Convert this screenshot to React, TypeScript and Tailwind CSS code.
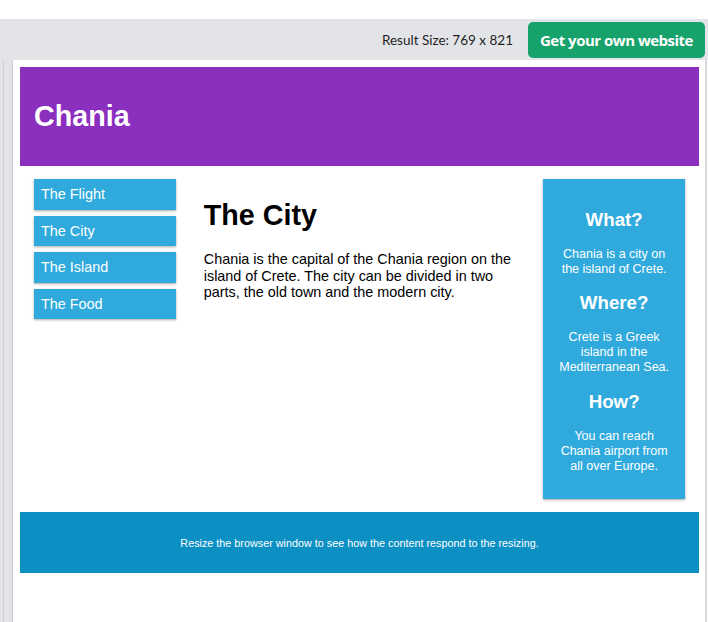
import React from "react";

const menuItems = ["The Flight", "The City", "The Island", "The Food"];

const facts = [
  { title: "What?", text: "Chania is a city on the island of Crete." },
  { title: "Where?", text: "Crete is a Greek island in the Mediterranean Sea." },
  { title: "How?", text: "You can reach Chania airport from all over Europe." },
];

const cardShadow =
  "shadow-[0_1px_3px_rgba(0,0,0,0.12),0_1px_2px_rgba(0,0,0,0.24)]";

const ResultBar: React.FC = () => (
  <div className="flex h-[41px] items-start justify-end bg-[#e3e4e8] pr-[3px] pt-[3px]">
    <span className="mr-[15px] mt-[10px] font-['Lato',sans-serif] text-[13.5px] leading-[16px] text-[#1f1f1f]">
      Result Size: 769 x 821
    </span>
    <a className="flex h-[36px] w-[177px] items-center justify-center rounded-[5px] bg-[#17a26b] font-['Open_Sans',sans-serif] text-[15px] font-bold tracking-[-0.5px] text-white">
      Get your own website
    </a>
  </div>
);

const App: React.FC = () => {
  return (
    <div className="flex h-[622px] w-[708px] flex-col overflow-hidden bg-white font-['Liberation_Sans',Arial,sans-serif]">
      <div className="h-[19px] bg-white" />
      <ResultBar />

      <div className="flex flex-1">
        {/* left gutter of the editor */}
        <div className="flex w-[13px] bg-[#e3e4e8]">
          <div className="w-[3px]" />
          <div className="w-px bg-[#cfcfd3]" />
          <div className="w-[8px]" />
          <div className="w-px bg-[#cacacd]" />
        </div>

        {/* result frame */}
        <div className="flex-1 pl-[7px] pr-[6px] pt-[7px] text-black">
          <header className="flex h-[99px] items-center bg-[#8b2fbf] px-[14px]">
            <h1 className="text-[28.7px] font-bold leading-[33px] text-white">Chania</h1>
          </header>

          <div className="grid grid-cols-4">
            <nav className="px-[14px] pb-[13px] pt-[13px]">
              <ul>
                {menuItems.map((item) => (
                  <li
                    key={item}
                    className={`mb-[6px] bg-[#30aadd] px-[7px] py-[7px] text-[14.4px] leading-[16.6px] text-white ${cardShadow}`}
                  >
                    {item}
                  </li>
                ))}
              </ul>
            </nav>

            <main className="col-span-2 px-[14px] pb-[13px] pt-[13px]">
              <h1 className="mb-[19px] mt-[20px] text-[28.7px] font-bold leading-[33px]">The City</h1>
              <p className="text-[14.4px] leading-[16.5px]">
                Chania is the capital of the Chania region on the island of Crete. The city can be
                divided in two parts, the old town and the modern city.
              </p>
            </main>

            <div className="px-[14px] pb-[13px] pt-[13px]">
              <aside
                className={`bg-[#30aadd] px-[13px] pb-[13px] pt-[14.5px] text-center text-[12.5px] leading-[15px] text-white ${cardShadow}`}
              >
                {facts.map((f) => (
                  <div key={f.title}>
                    <h2 className="my-[15.5px] text-[18.7px] font-bold leading-[22.4px]">{f.title}</h2>
                    <p className="my-[12.5px]">{f.text}</p>
                  </div>
                ))}
              </aside>
            </div>
          </div>

          <footer className="flex h-[61px] items-center justify-center bg-[#0c8fc3] text-[10.8px] leading-[12px] text-white">
            <p>Resize the browser window to see how the content respond to the resizing.</p>
          </footer>
        </div>

        {/* right edge */}
        <div className="w-[2px] bg-[#d9d9dc]" />
        <div className="w-px bg-white" />
      </div>
    </div>
  );
};

export default App;
